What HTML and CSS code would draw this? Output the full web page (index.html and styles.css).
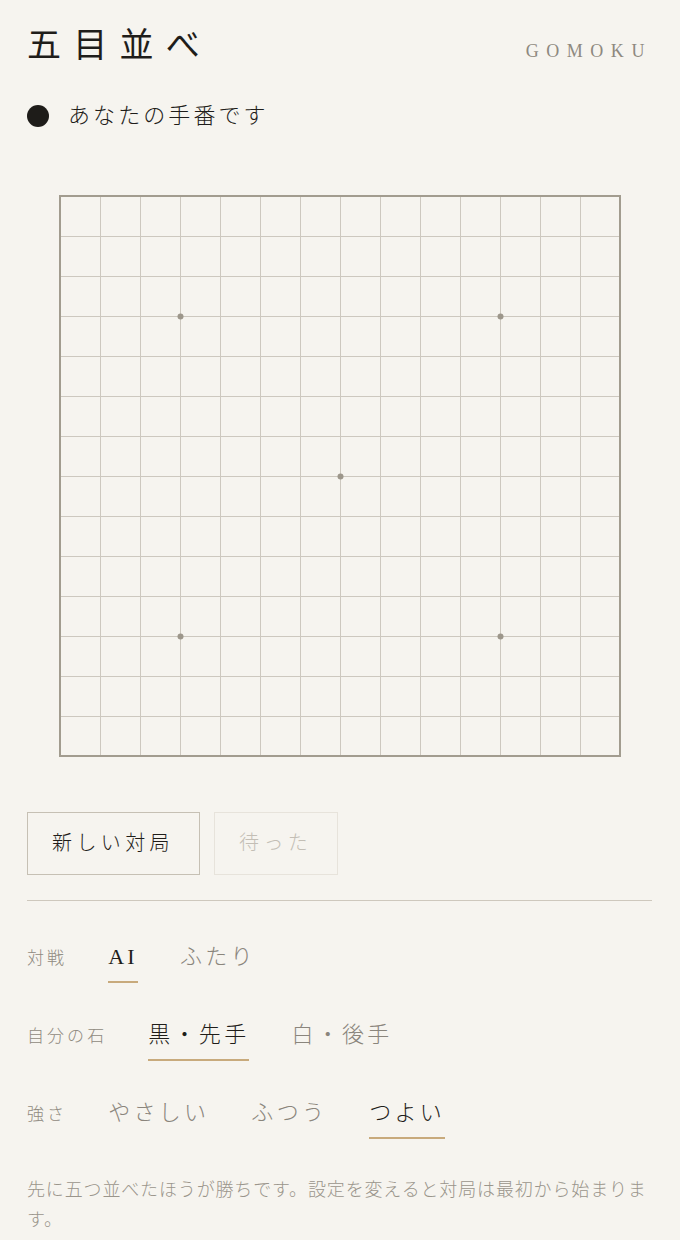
FILE: index.html
```html
<!DOCTYPE html>
<html lang="ja">
<head>
<meta charset="utf-8">
<title>五目並べ</title>
<link rel="stylesheet" href="styles.css">
</head>
<body>
<main class="page">
  <header class="header">
    <h1 class="title">五目並べ</h1>
    <span class="subtitle">GOMOKU</span>
  </header>

  <div class="status">
    <span class="stone"></span>
    <span class="status-text">あなたの手番です</span>
  </div>

  <div class="board">
    <svg class="board-svg" width="562" height="562" viewBox="0 0 562 562" aria-label="盤">
      <path class="grid" d="M41.5 1V561M81.5 1V561M121.5 1V561M161.5 1V561M201.5 1V561M241.5 1V561M281.5 1V561M321.5 1V561M361.5 1V561M401.5 1V561M441.5 1V561M481.5 1V561M521.5 1V561M1 41.5H561M1 81.5H561M1 121.5H561M1 161.5H561M1 201.5H561M1 241.5H561M1 281.5H561M1 321.5H561M1 361.5H561M1 401.5H561M1 441.5H561M1 481.5H561M1 521.5H561"/>
      <rect class="frame" x="1" y="1" width="560" height="560"/>
      <circle class="star" cx="121.5" cy="121.5" r="3"/>
      <circle class="star" cx="441.5" cy="121.5" r="3"/>
      <circle class="star" cx="281.5" cy="281.5" r="3"/>
      <circle class="star" cx="121.5" cy="441.5" r="3"/>
      <circle class="star" cx="441.5" cy="441.5" r="3"/>
    </svg>
  </div>

  <div class="actions">
    <button class="btn" type="button">新しい対局</button>
    <button class="btn btn-disabled" type="button" disabled>待った</button>
  </div>

  <hr class="divider">

  <section class="settings">
    <div class="setting-row">
      <span class="setting-label">対戦</span>
      <div class="options">
        <span class="option active">AI</span>
        <span class="option">ふたり</span>
      </div>
    </div>
    <div class="setting-row">
      <span class="setting-label">自分の石</span>
      <div class="options">
        <span class="option active">黒・先手</span>
        <span class="option">白・後手</span>
      </div>
    </div>
    <div class="setting-row">
      <span class="setting-label">強さ</span>
      <div class="options">
        <span class="option">やさしい</span>
        <span class="option">ふつう</span>
        <span class="option active">つよい</span>
      </div>
    </div>
  </section>

  <p class="note">先に五つ並べたほうが勝ちです。設定を変えると対局は最初から始まります。</p>
</main>
</body>
</html>
```

FILE: styles.css
```css
html, body {
  margin: 0;
  padding: 0;
}

body {
  background: #f6f4ef;
  color: #1f1d1a;
  font-family: "Liberation Serif", "Noto Sans CJK JP", serif;
  font-weight: 300;
}

.page {
  padding: 22px 28px 40px 27px;
}

.header {
  display: flex;
  justify-content: space-between;
  align-items: baseline;
}

.title {
  margin: 0;
  font-size: 34px;
  font-weight: 400;
  letter-spacing: 0.36em;
  line-height: 48px;
}

.subtitle {
  font-family: "Liberation Serif", serif;
  font-size: 18px;
  font-weight: 400;
  letter-spacing: 0.42em;
  color: #8e897f;
}

.status {
  display: flex;
  align-items: center;
  gap: 19px;
  margin-top: 30px;
  height: 32px;
}

.stone {
  width: 22px;
  height: 22px;
  border-radius: 50%;
  background: #1e1c19;
  flex: none;
}

.status-text {
  font-size: 22px;
  letter-spacing: 0.14em;
  line-height: 32px;
}

.board {
  width: 562px;
  height: 562px;
  margin: 63px auto 0;
}

.board-svg {
  display: block;
}

.grid {
  fill: none;
  stroke: #cdc8bf;
  stroke-width: 1;
  shape-rendering: crispEdges;
}

.frame {
  fill: none;
  stroke: #a29c8f;
  stroke-width: 2;
}

.star {
  fill: #9d978b;
}

.actions {
  display: flex;
  gap: 14px;
  margin-top: 55px;
}

.btn {
  font-family: inherit;
  font-weight: 300;
  font-size: 20px;
  letter-spacing: 0.22em;
  line-height: 29px;
  padding: 16px 25px 16px 24px;
  background: transparent;
  border: 1.5px solid #c6c0b4;
  border-radius: 0;
  color: #1f1d1a;
  cursor: pointer;
}

.btn-disabled {
  border-color: #e7e3db;
  color: #c3beb5;
  cursor: default;
}

.divider {
  border: 0;
  border-top: 1.5px solid #cec8bd;
  margin: 25px 0 0;
}

.settings {
  margin-top: 41px;
  display: flex;
  flex-direction: column;
  gap: 37px;
}

.setting-row {
  display: flex;
  align-items: baseline;
  gap: 41px;
}

.setting-label {
  font-size: 17px;
  letter-spacing: 0.18em;
  color: #8f8a80;
}

.options {
  display: flex;
  gap: 42px;
}

.option {
  font-size: 22px;
  letter-spacing: 0.15em;
  line-height: 30px;
  padding-bottom: 9px;
  border-bottom: 2px solid transparent;
  color: #8a857c;
}

.option.active {
  color: #1f1d1a;
  border-bottom-color: #c8aa7c;
}

.note {
  margin: 36px 0 0;
  font-size: 18px;
  letter-spacing: 0.85px;
  line-height: 30px;
  color: #9a958b;
}
```
